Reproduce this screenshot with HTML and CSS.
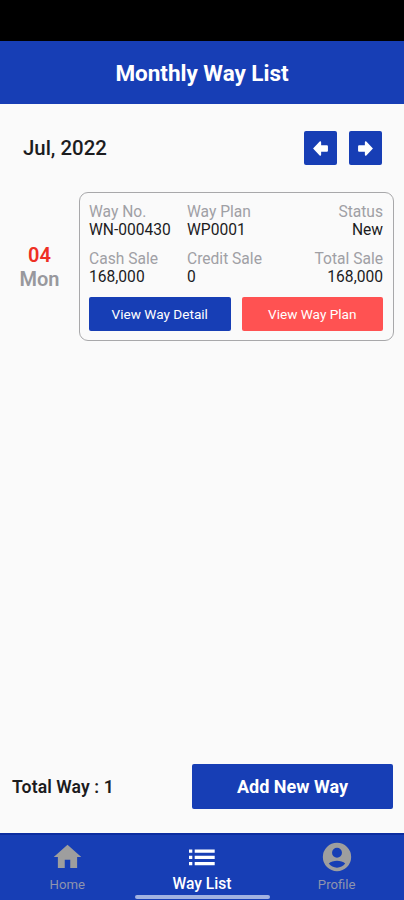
FILE: index.html
```html
<!DOCTYPE html>
<html lang="en">
<head>
<meta charset="utf-8">
<title>Monthly Way List</title>
<link rel="stylesheet" href="styles.css">
</head>
<body>
<div class="status-bar"></div>
<header class="header"><h1 class="title">Monthly Way List</h1></header>
<main class="content">
  <div class="month-row">
    <h2 class="month">Jul, 2022</h2>
    <div class="pager">
      <button class="pager-btn" aria-label="Previous month"><svg viewBox="0 0 16 16" width="17" height="17"><path d="M1 8 7.200 1.400Q8.600 .8 8.600 2.400V5H14Q15 5 15 6V10Q15 11 14 11H8.600V13.600Q8.600 15.200 7.200 14.600Z"/></svg></button>
      <button class="pager-btn" aria-label="Next month"><svg viewBox="0 0 16 16" width="17" height="17"><path d="M15 8 8.800 1.400Q7.400 .8 7.400 2.400V5H2Q1 5 1 6V10Q1 11 2 11H7.400V13.600Q7.400 15.200 8.800 14.600Z"/></svg></button>
    </div>
  </div>
  <div class="entry">
    <div class="date"><span class="day">04</span><span class="weekday">Mon</span></div>
    <section class="card">
      <dl class="fields">
        <div class="field"><dt>Way No.</dt><dd>WN-000430</dd></div>
        <div class="field"><dt>Way Plan</dt><dd>WP0001</dd></div>
        <div class="field end"><dt>Status</dt><dd>New</dd></div>
        <div class="field"><dt>Cash Sale</dt><dd>168,000</dd></div>
        <div class="field"><dt>Credit Sale</dt><dd>0</dd></div>
        <div class="field end"><dt>Total Sale</dt><dd>168,000</dd></div>
      </dl>
      <div class="actions">
        <button class="action detail">View Way Detail</button>
        <button class="action plan">View Way Plan</button>
      </div>
    </section>
  </div>
</main>
<div class="summary">
  <span class="total">Total Way : 1</span>
  <button class="add">Add New Way</button>
</div>
<nav class="nav">
  <a class="tab"><svg viewBox="0 0 24 24" width="33" height="33"><path d="M10 20v-6h4v6h5v-8h3L12 3 2 12h3v8z"/></svg><span>Home</span></a>
  <a class="tab active"><svg viewBox="0 0 33 33" width="33" height="33"><path d="M4 9h3.300v3.300H4zM9.700 9h20v3.300h-20zM4 15.200h3.300v3.300H4zM9.700 15.200h20v3.300h-20zM4 21.400h3.300v3.300H4zM9.700 21.400h20v3.300h-20z"/></svg><span>Way List</span></a>
  <a class="tab"><svg viewBox="0 0 24 24" width="34" height="34"><path d="M12 2a10 10 0 1 0 0 20 10 10 0 0 0 0-20zm0 3.500a3.500 3.500 0 1 1 0 7 3.500 3.500 0 0 1 0-7zM12 19.500c-2.300 0-4.400-1.100-5.800-2.900C7.500 15.400 9.800 14.700 12 14.700s4.500.7 5.800 1.900C16.400 18.400 14.300 19.500 12 19.500z"/></svg><span>Profile</span></a>
  <div class="gesture-bar"></div>
</nav>
</body>
</html>
```
FILE: styles.css
```css
* { box-sizing: border-box; }
body {
  margin: 0;
  height: 900px;
  display: flex;
  flex-direction: column;
  background: #fafafa;
  color: #1c1c1e;
  font-family: Roboto, sans-serif;
  overflow: hidden;
}
h1, h2, dl, dd { margin: 0; }
button { border: 0; padding: 0; font-family: inherit; color: #fff; background: #173eb5; }
.status-bar { height: 41px; background: #000; }
.header {
  height: 63px;
  display: flex;
  align-items: center;
  justify-content: center;
  background: #173eb5;
  color: #fff;
}
.title { font-size: 22.5px; line-height: 28px; font-weight: 700; letter-spacing: -0.02px; }
.content { flex: 1; }
.month-row {
  display: flex;
  align-items: center;
  justify-content: space-between;
  padding: 27px 22px 0 23px;
}
.month { font-size: 20.4px; line-height: 24px; font-weight: 500; }
.pager { display: flex; gap: 12px; }
.pager-btn {
  width: 33px;
  height: 34px;
  display: flex;
  align-items: center;
  justify-content: center;
  border-radius: 2px;
}
.pager-btn svg { fill: #fff; }
.entry { display: flex; margin-top: 27px; padding-right: 10px; }
.date {
  width: 79px;
  display: flex;
  flex-direction: column;
  align-items: center;
  justify-content: center;
  font-size: 20px;
  line-height: 24px;
  font-weight: 600;
}
.day { color: #ee3024; }
.weekday { color: #98989d; }
.card {
  flex: 1;
  height: 149px;
  padding: 10px 10px 0 9px;
  border: 1px solid #a8a8aa;
  border-radius: 9px;
}
.fields {
  display: grid;
  grid-template-columns: 98px 98px 1fr;
  row-gap: 11px;
  font-size: 15.6px;
  line-height: 18px;
}
.field dt { color: #a0a0a5; }
.end { text-align: right; }
.actions { display: grid; grid-template-columns: 1fr 1fr; gap: 11px; margin-top: 11px; }
.action { height: 34px; padding-bottom: 1px; border-radius: 2px; font-size: 13.6px; }
.plan { background: #ff5252; }
.summary {
  display: flex;
  align-items: center;
  justify-content: space-between;
  padding: 0 11px 24px 12px;
}
.total { font-size: 17.6px; font-weight: 600; letter-spacing: 0.1px; }
.add { width: 201px; height: 45px; border-radius: 2px; font-size: 18px; font-weight: 700; }
.nav {
  position: relative;
  height: 67px;
  display: grid;
  grid-template-columns: repeat(3, 1fr);
  border-top: 2px solid #0c2da0;
  background: #173eb5;
}
.tab {
  display: flex;
  flex-direction: column;
  align-items: center;
  padding-top: 5px;
  font-size: 13.2px;
  color: #8e94ad;
}
.tab svg { height: 34px; fill: #9e9e9e; }
.tab span { margin-top: 3px; line-height: 16px; }
.active { color: #fff; font-size: 15.6px; font-weight: 500; }
.active svg { fill: #fff; }
.tab.active span { margin-top: 2px; }
.gesture-bar {
  position: absolute;
  left: 135px;
  bottom: 1px;
  width: 135px;
  height: 4px;
  border-radius: 2px;
  background: #a2b2e1;
}
```
